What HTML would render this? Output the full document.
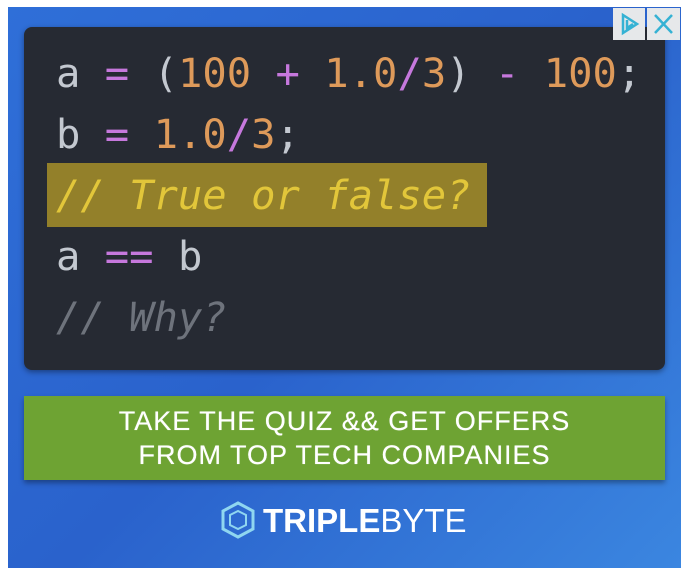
<!DOCTYPE html>
<html><head><style>
body{margin:0;width:688px;height:574px;background:#fff;position:relative;overflow:hidden;font-family:"Liberation Sans",sans-serif}
#ad{position:absolute;left:8px;top:7px;width:673px;height:561px;background:linear-gradient(135deg,#2f6fd8,#2a62cc 50%,#3b86e0);}
#code{position:absolute;left:24px;top:27px;width:641px;height:343px;background:#262a33;border-radius:8px;box-shadow:0 2px 6px rgba(0,0,0,.4)}
.l{position:absolute;left:32px;font-family:"DejaVu Sans Mono",monospace;font-size:40.5px;line-height:61px;color:#c3c8d0;white-space:pre}
.o{color:#de9a5a}.p{color:#c678dd}.c{color:#6e737c;font-style:italic}
#hl{position:absolute;left:23px;top:136px;width:440px;height:64px;background:#93802a}
#btn{position:absolute;left:24px;top:396px;width:641px;height:84px;background:#6ea333;box-shadow:0 3px 5px rgba(0,0,0,.35);color:#fff;text-align:center;font-size:27px;line-height:34px;padding-top:8px;box-sizing:border-box;letter-spacing:1px;text-shadow:0 0 0.6px #fff}
#logo{position:absolute;left:219px;top:500px;color:#fff;font-size:33px;font-weight:bold;line-height:40px}
#x{position:absolute;left:613px;top:8px;width:67px;height:32px}
</style></head><body>
<div id="ad">
</div>
<div id="code">
<div id="hl"></div>
<div class="l" style="top:16px">a <span class="p">=</span> (<span class="o">100</span> <span class="p">+</span> <span class="o">1.0</span><span class="p">/</span><span class="o">3</span>) <span class="p">-</span> <span class="o">100</span>;</div>
<div class="l" style="top:77px">b <span class="p">=</span> <span class="o">1.0</span><span class="p">/</span><span class="o">3</span>;</div>
<div class="l" style="top:138px;color:#e2c63a;font-style:italic">// True or false?</div>
<div class="l" style="top:199px">a <span class="p">==</span> b</div>
<div class="l c" style="top:260px">// Why?</div>
</div>
<div id="btn">TAKE THE QUIZ &amp;&amp; GET OFFERS<br>FROM TOP TECH COMPANIES</div>
<div id="logo"><svg width="38" height="40" viewBox="0 0 38 40" style="vertical-align:-8px;margin-right:6px"><path d="M19 3L34 11V29L19 37L4 29V11Z" fill="none" stroke="#8fd6f0" stroke-width="3"/><path d="M11 15L19 11L27 15V25L19 29L11 25Z" fill="none" stroke="#8fd6f0" stroke-width="2"/></svg>TRIPLE<span style="font-weight:normal">BYTE</span></div>
<svg id="x" viewBox="0 0 67 32"><rect x="0" y="0" width="32" height="32" fill="#e6e8ea"/><rect x="34" y="0" width="33" height="32" fill="#e6e8ea"/><path d="M10 7V25L24 16Z M14 12V20L20 16" fill="none" stroke="#35b2d4" stroke-width="2.5"/><path d="M42 7L59 25M59 7L42 25" stroke="#35b2d4" stroke-width="2.5"/></svg>
</body></html>
